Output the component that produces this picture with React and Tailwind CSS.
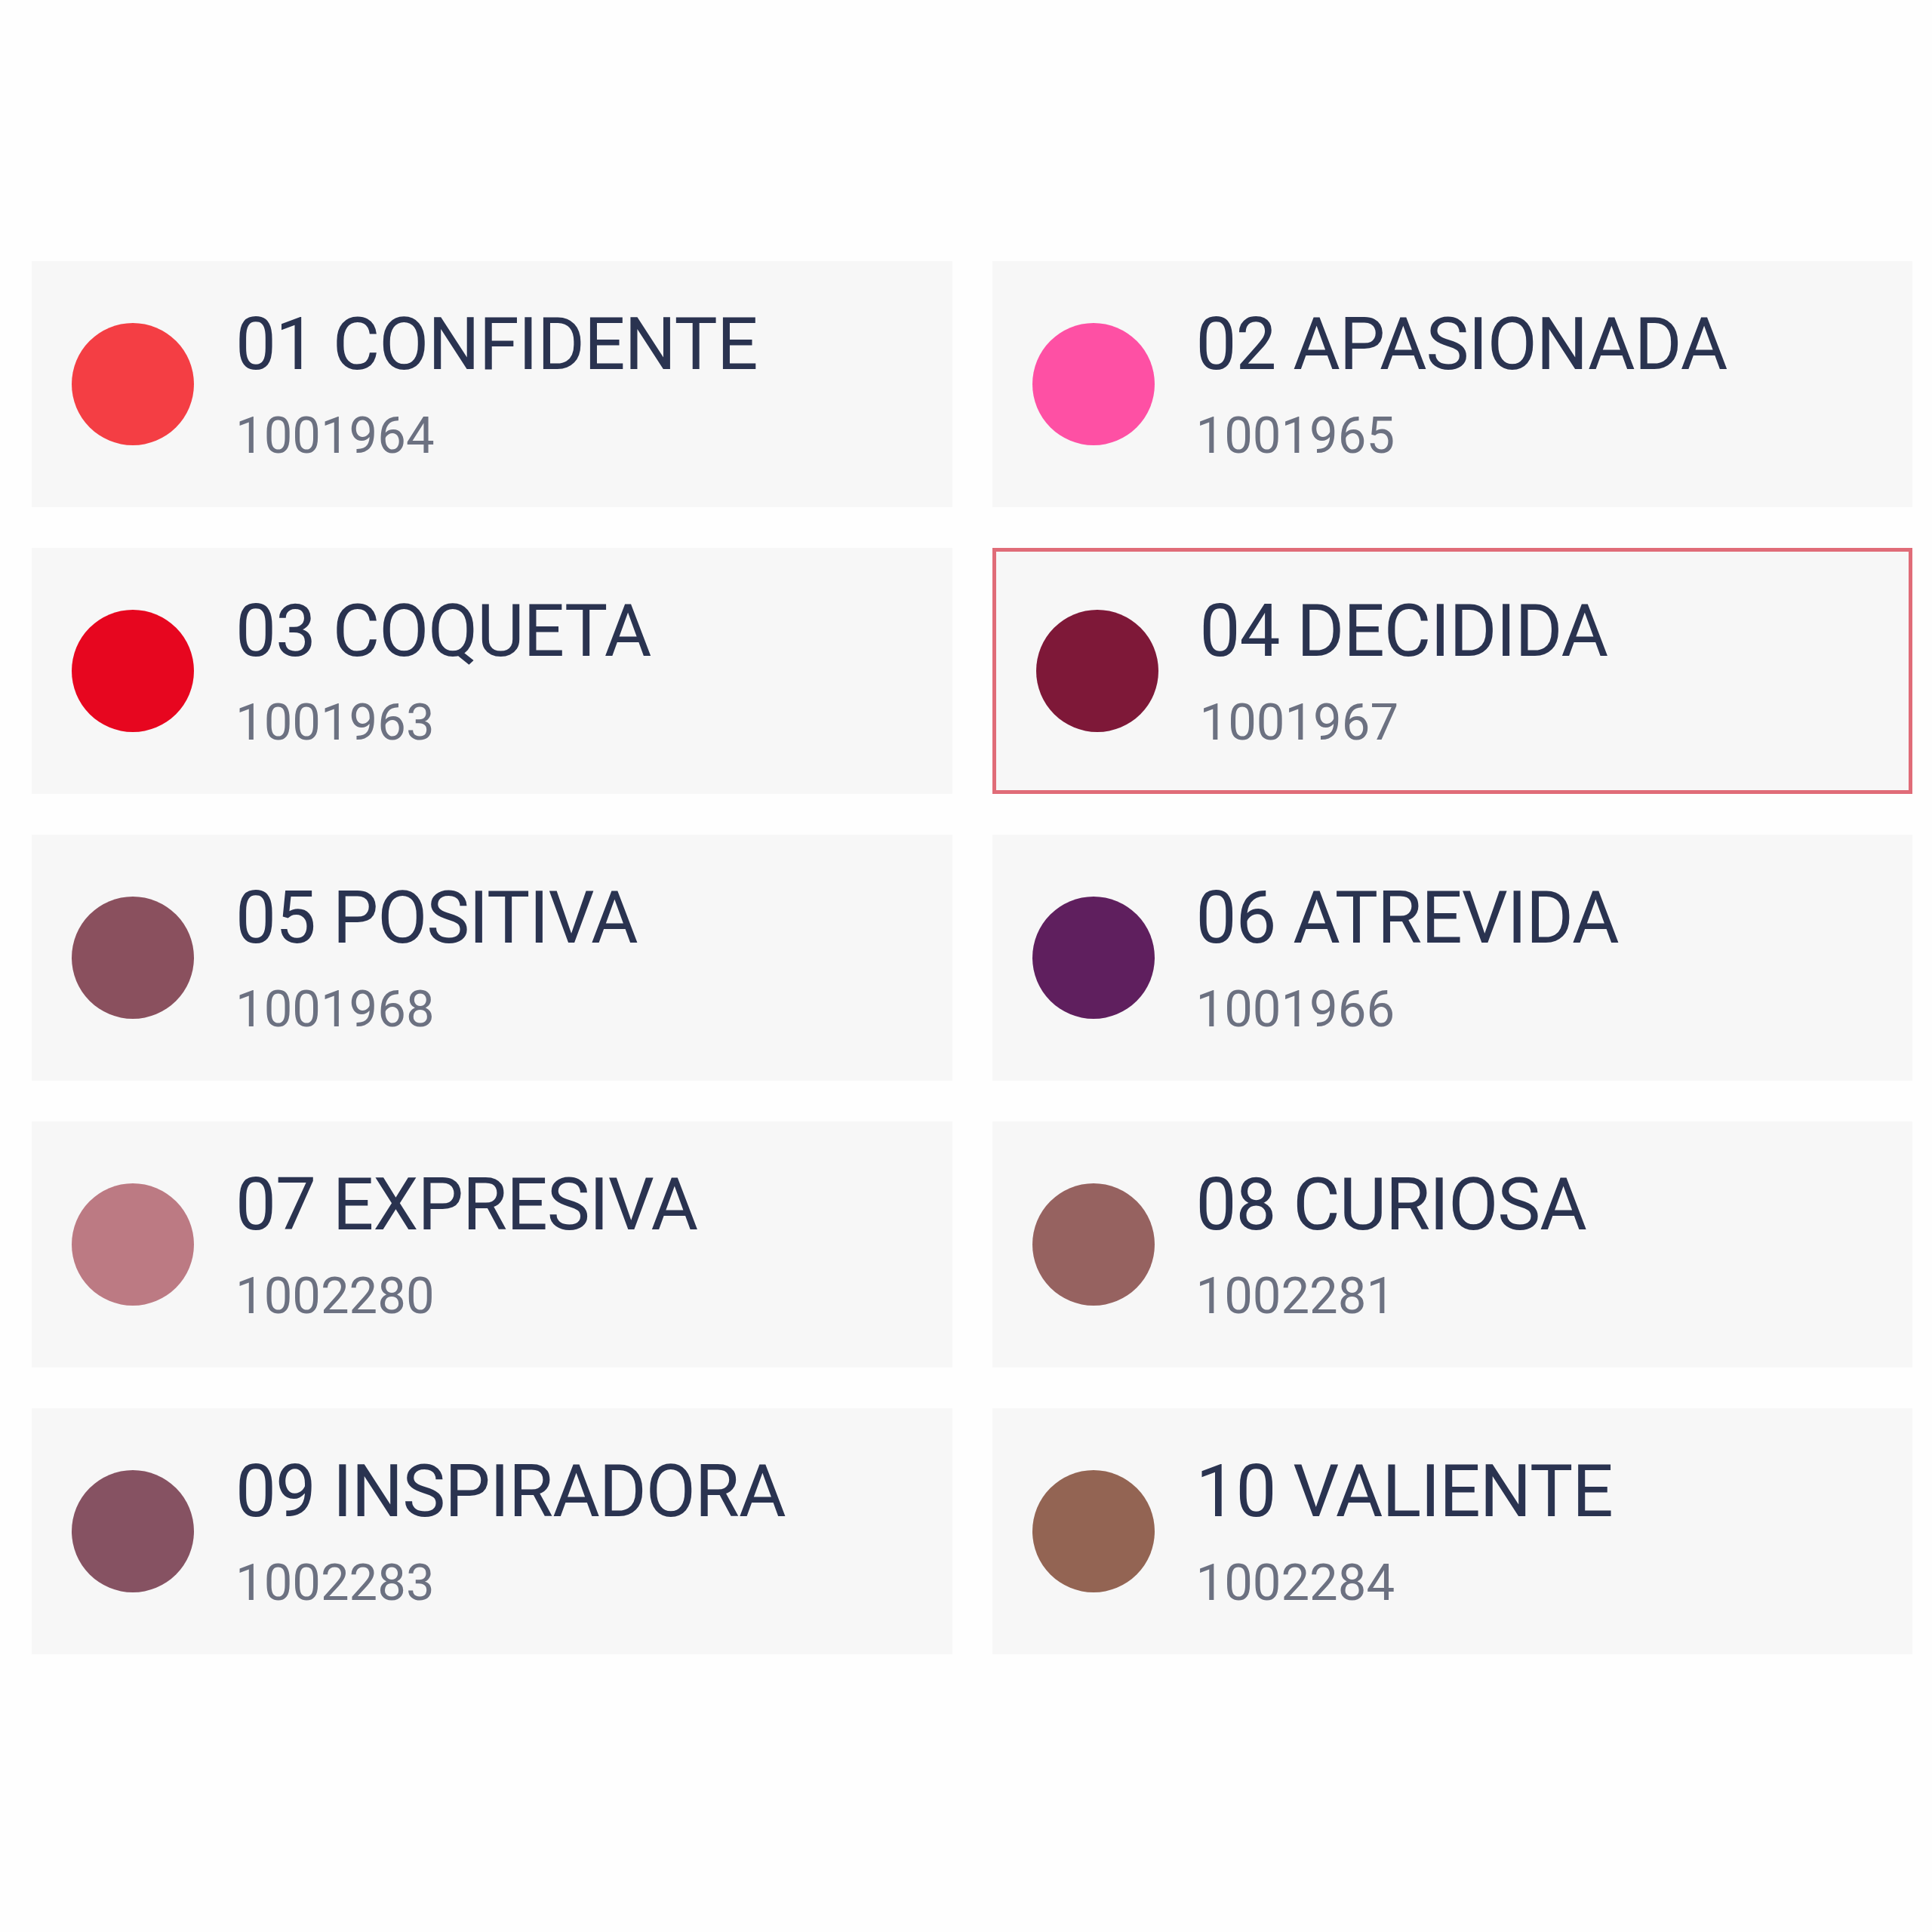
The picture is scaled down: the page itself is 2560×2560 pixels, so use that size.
const shades = [
  { name: '01 CONFIDENTE', code: '1001964', color: '#f43e44' },
  { name: '02 APASIONADA', code: '1001965', color: '#fe50a4' },
  { name: '03 COQUETA', code: '1001963', color: '#e7061f' },
  { name: '04 DECIDIDA', code: '1001967', color: '#7e1838', selected: true },
  { name: '05 POSITIVA', code: '1001968', color: '#8a505e' },
  { name: '06 ATREVIDA', code: '1001966', color: '#5f1f5e' },
  { name: '07 EXPRESIVA', code: '1002280', color: '#bc7a83' },
  { name: '08 CURIOSA', code: '1002281', color: '#966260' },
  { name: '09 INSPIRADORA', code: '1002283', color: '#865262' },
  { name: '10 VALIENTE', code: '1002284', color: '#936453' },
];

function ShadeCard({ shade }) {
  return (
    <div
      className={`flex h-[326px] items-center bg-[#f7f7f7] pl-[53px] ${
        shade.selected ? 'border-[5px] border-[#e06c78]' : ''
      }`}
    >
      <div
        className="h-[162px] w-[162px] shrink-0 rounded-full"
        style={{ backgroundColor: shade.color }}
      />
      <div className="ml-[55px] flex flex-col gap-[40px]">
        <div className="text-[96px] leading-none tracking-[-1px] text-[#2a3350]">{shade.name}</div>
        <div className="text-[67px] leading-none text-[#6c7181]">{shade.code}</div>
      </div>
    </div>
  );
}

export default function App() {
  return (
    <div
      className="min-h-[2560px] w-[2560px] bg-[#fefefe] pt-[346px] pl-[42px] pr-[26px]"
      style={{ fontFamily: 'Roboto, "Liberation Sans", sans-serif' }}
    >
      <div className="grid grid-cols-2 gap-x-[53px] gap-y-[54px]">
        {shades.map((shade) => (
          <ShadeCard key={shade.code} shade={shade} />
        ))}
      </div>
    </div>
  );
}
